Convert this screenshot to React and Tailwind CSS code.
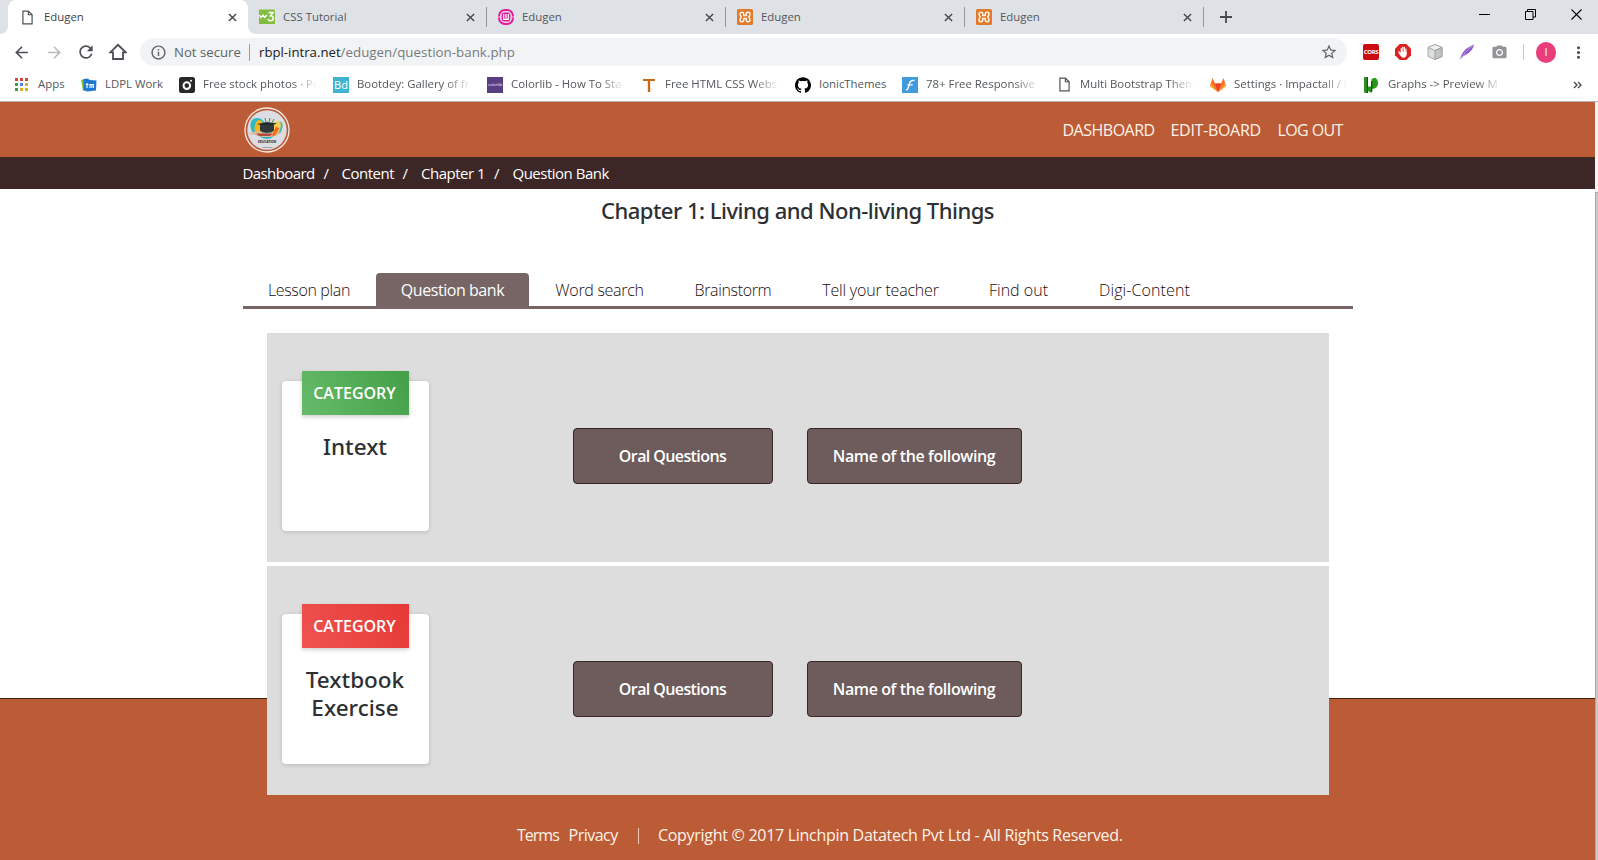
import { SiGithub } from "react-icons/si";
import { MdRefresh, MdArrowBack, MdArrowForward, MdInfoOutline, MdStarBorder, MdMoreVert, MdCameraAlt } from "react-icons/md";

function PageIcon({ className = "" }) {
  return (
    <svg viewBox="0 0 12 16" className={`h-[15px] w-[11px] ${className}`} fill="none" stroke="#4d5156" strokeWidth="1.3">
      <path d="M1 1h6l4 4v10H1z" />
      <path d="M7 1v4h4" />
    </svg>
  );
}

function CloseIcon() {
  return (
    <svg viewBox="0 0 10 10" className="h-[9px] w-[9px]" stroke="#45494d" strokeWidth="1.6" fill="none">
      <path d="M1 1l8 8M9 1l-8 8" />
    </svg>
  );
}

function W3Icon() {
  return (
    <svg viewBox="0 0 16 16" className="h-4 w-4">
      <rect width="16" height="14.5" y="0.5" fill="#83bf3f" />
      <path d="M0.5 6l1.500 2.500L4 6l1.800 2.500L8 6" stroke="#fff" strokeWidth="1.3" fill="none" />
      <path d="M9.500 3.500h4.500l-2.400 3.200c3.600-.2 3.400 5 0 5-1.600 0-2.300-.8-2.400-1.700" stroke="#fff" strokeWidth="1.5" fill="none" />
    </svg>
  );
}

function WampIcon() {
  return (
    <svg viewBox="0 0 16 16" className="h-4 w-4" fill="none">
      <rect x="1" y="1" width="14" height="14" rx="6" stroke="#e6189a" strokeWidth="1.9" />
      <rect x="3.6" y="3.4" width="8.8" height="9.2" rx="3" fill="#e6189a" />
      <path d="M0 8h3M13 8h3" stroke="#fbd" strokeWidth="1" />
      <path d="M5.700 5v5.300h4.600V5M8 5v5" stroke="#fff" strokeWidth="1.2" />
    </svg>
  );
}

function XamppIcon() {
  return (
    <svg viewBox="0 0 16 16" className="h-4 w-4">
      <rect width="16" height="16" rx="1.5" fill="#e07a2c" />
      <path
        d="M6.700 6.500V5c0-2.200-3.700-2.200-3.700 0 0 1.300.4 2.100 1.300 3C3.400 8.900 3 9.700 3 11c0 2.200 3.700 2.200 3.700 0V9.500h2.600V11c0 2.200 3.700 2.200 3.700 0 0-1.300-.4-2.100-1.300-3 .9-.9 1.300-1.700 1.300-3 0-2.200-3.700-2.200-3.700 0v1.500z"
        fill="none"
        stroke="#fff4e2"
        strokeWidth="1.5"
        strokeLinejoin="round"
      />
    </svg>
  );
}

const TABS = [
  { title: "CSS Tutorial", icon: <W3Icon /> },
  { title: "Edugen", icon: <WampIcon /> },
  { title: "Edugen", icon: <XamppIcon /> },
  { title: "Edugen", icon: <XamppIcon /> },
];

function TabStrip() {
  return (
    <div className="flex h-[34px] w-full bg-[#dee1e6] text-[11.4px] text-[#54585c]">
      <div className="flex h-full w-2 shrink-0 bg-white">
        <div className="h-full w-full rounded-br-lg bg-[#dee1e6]" />
      </div>
      <div className="flex h-full w-[240px] shrink-0 items-center rounded-t-lg bg-white pl-[14px] pr-[11px] text-[#3f4347]">
        <PageIcon />
        <span className="ml-[11px] flex-1">Edugen</span>
        <CloseIcon />
      </div>
      <div className="flex h-full w-2 shrink-0 bg-white">
        <div className="h-full w-full rounded-bl-lg bg-[#dee1e6]" />
      </div>
      {TABS.map((tab, i) => (
        <div
          key={i}
          className={`flex h-full shrink-0 items-center pr-[10px] ${i === 0 ? "w-[231px] pl-[3px]" : "w-[239px] pl-[11px]"}`}
        >
          {tab.icon}
          <span className="ml-2 flex-1">{tab.title}</span>
          <CloseIcon />
          <span className="-mr-[10px] ml-[11px] h-5 w-px bg-[#94989d]" />
        </div>
      ))}
      <div className="flex flex-1 items-center pl-[16px]">
        <svg viewBox="0 0 12 12" className="h-3 w-3" stroke="#45494d" strokeWidth="1.8">
          <path d="M6 0v12M0 6h12" />
        </svg>
      </div>
      <div className="flex h-[28px] items-center gap-[35px] pr-4">
        <svg viewBox="0 0 11 11" className="h-[11px] w-[11px]" stroke="#000">
          <path d="M0 5.500h11" />
        </svg>
        <svg viewBox="0 0 11 11" className="h-[11px] w-[11px]" stroke="#000" fill="none">
          <path d="M.5 2.500h7.500v8H.5zM2.500 2.500v-2h8v7.500h-2.500" />
        </svg>
        <svg viewBox="0 0 11 11" className="h-[11px] w-[11px]" stroke="#000" strokeWidth="1.1">
          <path d="M.5.5l10 10M10.500.5l-10 10" />
        </svg>
      </div>
    </div>
  );
}

function Toolbar() {
  return (
    <div className="flex h-[36px] w-full items-center bg-white text-[#5f6368]">
      <div className="flex w-[140px] shrink-0 items-center pl-3">
        <MdArrowBack className="h-[19px] w-[19px] text-[#4b4f53]" />
        <MdArrowForward className="ml-[14px] h-[19px] w-[19px] text-[#b9bbbe]" />
        <MdRefresh className="ml-[12px] h-5 w-5 text-[#4b4f53]" />
        <svg viewBox="0 0 18 18" className="ml-[13px] h-[18px] w-[18px]" fill="none" stroke="#4b4f53" strokeWidth="1.8">
          <path d="M1.300 9.300L9 1.800l7.700 7.500H14V16H4V9.300z" />
        </svg>
      </div>
      <div className="flex h-[28px] w-[1207px] shrink-0 items-center rounded-full bg-[#f1f3f4] text-[13.2px]">
        <MdInfoOutline className="ml-[10px] h-[17px] w-[17px]" />
        <span className="ml-[7px] w-[67px] whitespace-nowrap pt-px">Not secure</span>
        <span className="ml-2 mr-[9px] h-[17px] w-px bg-[#9a9ea3]" />
        <span className="flex-1 whitespace-nowrap pt-px">
          <span className="text-[#202124]">rbpl-intra.net</span>
          <span className="text-[13.3px] tracking-[0.03px] text-[#777b80]">/edugen/question-bank.php</span>
        </span>
        <MdStarBorder className="mr-[9px] h-[18px] w-[18px]" />
      </div>
      <div className="flex flex-1 items-center">
        <span className="ml-4 flex h-4 w-4 items-center justify-center rounded-[2px] bg-[#cc0d10] text-[6px] font-bold tracking-[-0.3px] text-white">
          CORS
        </span>
        <svg viewBox="0 0 16 16" className="ml-4 h-4 w-4">
          <path d="M4.700 0h6.600L16 4.700v6.600L11.300 16H4.700L0 11.300V4.700z" fill="#d92320" />
          <path
            d="M4.400 9.500L3.900 7.500M6.300 8.500V4.300M7.900 8V3M9.500 8V3.600M11 9V5"
            stroke="#fff"
            strokeWidth="1.2"
            strokeLinecap="round"
          />
          <path d="M5.700 8h5.900v2.500c0 2-1.300 3.200-2.900 3.200-2 0-3.200-1.700-4.700-4z" fill="#fff" />
        </svg>
        <svg viewBox="0 0 16 16" className="ml-4 h-4 w-4" stroke="#96999c" strokeWidth=".8" strokeLinejoin="round">
          <path d="M8 .5l7 3v9l-7 3-7-3v-9z" fill="#dcdddd" />
          <path d="M1 3.500l7 3 7-3L8 .5z" fill="#f1f1f1" />
          <path d="M8 6.500v9l7-3v-9z" fill="#c1c3c4" />
        </svg>
        <svg viewBox="0 0 16 16" className="ml-4 h-4 w-4">
          <path d="M1 15.500c1.500-6.500 5-11.500 14-15-.8 4-3.500 7.500-6.500 9.200L4.500 12z" fill="#8a52c6" />
          <path d="M1 15.500C4.500 10 8.500 5.500 14 1.500" stroke="#d6b9f0" strokeWidth=".8" fill="none" />
        </svg>
        <MdCameraAlt className="ml-4 h-[17px] w-[17px] text-[#929497]" />
        <span className="ml-[15px] h-4 w-px bg-[#c4c7ca]" />
        <span className="ml-[12px] flex h-[21px] w-[20px] items-center justify-center rounded-full bg-[#ea3d7c] text-[11px] text-white">
          I
        </span>
        <MdMoreVert className="ml-[13px] h-[19px] w-[19px] text-[#4b4f53]" />
      </div>
    </div>
  );
}

function AppsIcon() {
  const fills = ["#d9453c", "#d9453c", "#d9453c", "#3c9a5b", "#4a83e0", "#e3aa23", "#3c9a5b", "#e3aa23", "#e3aa23"];
  return (
    <svg viewBox="0 0 13 13" className="h-[13px] w-[13px]">
      {fills.map((fill, i) => (
        <rect key={i} x={(i % 3) * 5} y={Math.floor(i / 3) * 5} width="3" height="3" fill={fill} />
      ))}
    </svg>
  );
}

const BOOKMARKS = [
  { text: "Apps", box: "w-[66px]", slot: "w-[23px]", icon: <AppsIcon /> },
  {
    text: "LDPL Work",
    box: "w-[98px]",
    slot: "w-[24px]",
    icon: (
      <svg viewBox="0 0 16 16" className="h-4 w-4">
        <path d="M0 3l4-1 1 11-3 1z" fill="#86c440" />
        <path d="M2.500 2l4.500-.5 1.500 1.500 7 .5-.5 10-9 1-3.500-1.500z" fill="#1e78d2" />
        <path d="M6 6v5M4.800 7.500h2.700M9 11V7.500h1.800V11M10.800 7.500h1.700V11" stroke="#fff" strokeWidth="1.1" fill="none" />
      </svg>
    ),
  },
  {
    text: "Free stock photos · Pe",
    box: "w-[154px]",
    slot: "w-[24px]",
    fade: true,
    icon: (
      <svg viewBox="0 0 16 16" className="h-4 w-4">
        <rect width="16" height="16" rx="2.5" fill="#282828" />
        <circle cx="7.8" cy="8.6" r="3.3" fill="none" stroke="#fff" strokeWidth="2" />
        <circle cx="12" cy="3.7" r="1" fill="#fff" />
      </svg>
    ),
  },
  {
    text: "Bootdey: Gallery of fr",
    box: "w-[154px]",
    slot: "w-[24px]",
    fade: true,
    icon: (
      <span className="flex h-4 w-4 items-center justify-center bg-[#3fb3d2] text-[11px] leading-none text-white">Bd</span>
    ),
  },
  {
    text: "Colorlib - How To Sta",
    box: "w-[155.5px]",
    slot: "w-[24px]",
    fade: true,
    icon: (
      <span className="flex h-4 w-4 items-center justify-center overflow-hidden bg-[#573e85] text-[4px] leading-none text-white">
        colorlib
      </span>
    ),
  },
  {
    text: "Free HTML CSS Webs",
    box: "w-[152.5px]",
    slot: "w-[22.5px]",
    fade: true,
    icon: (
      <svg viewBox="0 0 12 14" className="h-[14px] w-3">
        <path d="M0 1h12v2H7.200v11H4.800V3H0z" fill="#c56a17" />
      </svg>
    ),
  },
  { text: "IonicThemes", box: "w-[107px]", slot: "w-[24px]", icon: <SiGithub className="h-4 w-4 text-black" /> },
  {
    text: "78+ Free Responsive",
    box: "w-[155.5px]",
    slot: "w-[24px]",
    fade: true,
    icon: (
      <svg viewBox="0 0 16 16" className="h-4 w-4">
        <rect width="16" height="16" fill="#3f9bdb" />
        <path d="M12.500 3.500C9 3 8 4 7.500 6.500L6 11.500c-.4 1.300-1 1.500-2.200 1.300M5.500 7.800h5.200" stroke="#fff" strokeWidth="1.3" fill="none" />
      </svg>
    ),
  },
  { text: "Multi Bootstrap Them", box: "w-[152px]", slot: "w-[22.5px]", fade: true, icon: <PageIcon className="ml-px" /> },
  {
    text: "Settings · Impactall / i",
    box: "w-[153.5px]",
    slot: "w-[24.5px]",
    fade: true,
    icon: (
      <svg viewBox="0 0 16 16" className="h-4 w-4">
        <path d="M8 15L0 9l2.500-8L5 6.500h6L13.500 1 16 9z" fill="#fc6d26" />
        <path d="M8 15L5 6.500h6z" fill="#e24329" />
        <path d="M8 15L0 9l1-2.800zM8 15l8-6-1-2.800z" fill="#fca326" />
      </svg>
    ),
  },
  {
    text: "Graphs -> Preview M",
    box: "w-[150px]",
    slot: "w-[25px]",
    fade: true,
    icon: (
      <svg viewBox="0 0 16 16" className="h-4 w-4">
        <path d="M1 0h4v16H2l-1-1z" fill="#2f8f22" />
        <path d="M5 9.500h3.500V16L5 14zM8.500 2L12 .8c2.200 1 3 3 3 5.500 0 3.200-1.800 5.200-5 5.500L8.500 12z" fill="#249a18" />
        <path d="M3.800 0H5v16H3.800zM8 4h1.400v10.500L8 15z" fill="#125c0c" />
      </svg>
    ),
  },
];

function BookmarksBar() {
  return (
    <div className="flex h-[31px] w-full items-center bg-white pb-[2px] pl-[15px] pr-4 text-[11.4px] text-[#54585c]">
      {BOOKMARKS.map((b) => (
        <div key={b.text} className={`flex h-full shrink-0 items-center ${b.box}`}>
          <span className={`flex shrink-0 ${b.slot}`}>{b.icon}</span>
          <span
            className={`whitespace-nowrap pb-px ${
              b.fade ? "w-[114px] overflow-hidden [mask-image:linear-gradient(to_right,#000_78%,transparent)]" : ""
            }`}
          >
            {b.text}
          </span>
        </div>
      ))}
      <svg viewBox="0 0 9 8" className="ml-auto h-2 w-[9px]" fill="none" stroke="#45494d" strokeWidth="1.4">
        <path d="M1 1l3 3-3 3M5 1l3 3-3 3" />
      </svg>
    </div>
  );
}

function Logo() {
  return (
    <svg viewBox="0 0 46 46" className="h-[46px] w-[46px]">
      <circle cx="23" cy="23" r="22" fill="#b65b3a" stroke="#fbe9dd" strokeWidth="1.3" />
      <circle cx="23" cy="23" r="19.7" fill="#dcdee3" />
      <path d="M7 22c-2-6 1-11 6-11 4 0 6 2 8 5h12c4-4 7 0 5 6-1 4-4 6-8 7-2 2-4 3-7 3s-6-1-8-3c-4-1-7-3-8-7z" fill="#2fb9c4" />
      <path d="M11 25c-1-5 0-11 4-12 4 0 4 4 4 7l-1 6z" fill="#f2b51d" />
      <path d="M29 15l6-1c3 2 2 7 0 11l-7 2z" fill="#f4cf58" />
      <path d="M4 26.500l9-2.500 8 2 9-1 9 .5-7 3c-5 2-15 2-19 0z" fill="#e0b89c" />
      <path d="M12 26.500h17l-3 2.500H15z" fill="#b3483c" />
      <path d="M13 17l10-2 10 1.500-9 3.500z" fill="#232a2c" />
      <path d="M16 18h14v5.500c-3 3-11 3-14 0z" fill="#30383a" />
      <path d="M28 28.500l4-9 3.500 2-5 7.500z" fill="#ef6c1a" />
      <path d="M22 15l-1-4M25 15l1-4M28 16l2-4" stroke="#3a8f5a" strokeWidth="1" />
      <text x="23" y="36.200" textAnchor="middle" fontSize="3.2" fontWeight="700" fill="#1d1d1d" textLength="18">
        EDUCATION
      </text>
      <path d="M18.500 40.500h10" stroke="#8d97a3" strokeWidth=".8" />
    </svg>
  );
}

function SiteHeader() {
  return (
    <header className="text-white">
      <div className="h-[55px] bg-[#bc5c36]">
        <div className="mx-auto flex h-full w-[1110px] items-center pl-px">
          <div className="pt-px">
            <Logo />
          </div>
          <nav className="ml-auto flex whitespace-nowrap pr-[10px] pt-px text-[16px] text-[#fff3e9]">
            <a className="w-[108px] tracking-[-0.5px]">DASHBOARD</a>
            <a className="w-[107px] tracking-[-0.3px]">EDIT-BOARD</a>
            <a className="w-[65px] tracking-[-0.6px]">LOG OUT</a>
          </nav>
        </div>
      </div>
      <div className="h-[32px] bg-[#3c2626]">
        <div className="mx-auto flex h-full w-[1110px] items-center whitespace-nowrap pt-px text-[15px] tracking-[-0.5px]">
          <a className="w-[81px] tracking-[-0.6px]">Dashboard</a>
          <span className="w-[18px]">/</span>
          <a className="w-[61px]">Content</a>
          <span className="w-[18.5px]">/</span>
          <a className="w-[73px]">Chapter 1</a>
          <span className="w-[18.5px]">/</span>
          <a>Question Bank</a>
        </div>
      </div>
    </header>
  );
}

const SECTIONS = [
  { text: "Lesson plan", cls: "w-[133px] font-light text-[#1c0c0c] tracking-[-0.35px]" },
  { text: "Question bank", cls: "w-[153px] pl-px rounded-t bg-[#766564] text-white tracking-[-0.45px]" },
  { text: "Word search", cls: "w-[140px] pl-0.5 font-light text-[#1c0c0c] tracking-[-0.3px]" },
  { text: "Brainstorm", cls: "w-[127px] pl-0.5 font-light text-[#1c0c0c] tracking-[-0.35px]" },
  { text: "Tell your teacher", cls: "w-[167px] pl-[3px] font-light text-[#1c0c0c] tracking-[-0.2px]" },
  { text: "Find out", cls: "w-[110px] pl-0.5 font-light text-[#1c0c0c]" },
  { text: "Digi-Content", cls: "w-[142px] pl-0.5 font-light text-[#1c0c0c] tracking-[0.1px]" },
];

function SectionTabs() {
  return (
    <div className="mx-auto mt-[45px] flex h-[36px] w-[1110px] border-b-[3px] border-[#766564] text-[16px]">
      {SECTIONS.map((s) => (
        <a key={s.text} className={`flex items-center justify-center whitespace-nowrap pt-px ${s.cls}`}>
          {s.text}
        </a>
      ))}
    </div>
  );
}

function QuestionButton({ className = "", children }) {
  return (
    <button
      className={`h-[56px] rounded border border-[#3c2626] bg-[#6d5c5b] pb-px text-[16px] font-semibold text-white ${className}`}
    >
      {children}
    </button>
  );
}

function CategoryPanel({ title, badge }) {
  return (
    <section className="flex h-[229px] items-start bg-[#dddddd] pl-[15px]">
      <div className="mt-[48px] flex h-[150px] w-[147px] flex-col items-center rounded bg-white shadow-[0_1px_4px_rgba(0,0,0,0.16)]">
        <div
          className={`-mt-[10px] flex h-[44px] w-[107px] shrink-0 items-center justify-center pb-px pr-px text-[16px] font-semibold text-white shadow-[0_2px_4px_rgba(0,0,0,0.18)] ${badge}`}
        >
          CATEGORY
        </div>
        <h3 className="mt-[18px] w-[120px] text-center font-['Noto_Sans','Open_Sans',sans-serif] text-[22.5px] font-medium leading-[28px] text-[#2d3033]">
          {title}
        </h3>
      </div>
      <QuestionButton className="ml-[144px] mt-[95px] w-[200px] tracking-[-0.6px]">Oral Questions</QuestionButton>
      <QuestionButton className="ml-[34px] mt-[95px] w-[215px] tracking-[-0.4px]">Name of the following</QuestionButton>
    </section>
  );
}

function SiteFooter() {
  return (
    <footer className="flex h-[162px] items-end whitespace-nowrap border-t border-[#3c2010] bg-[#bc5c36] pb-[14px] pl-[517px] text-[#fff3e9]">
      <div className="flex h-5 items-center text-[16px]">
        <a className="w-[51.5px] pb-0.5 tracking-[-1px]">Terms</a>
        <a className="w-[49px] pb-0.5 tracking-[-0.5px]">Privacy</a>
        <span className="ml-[20.5px] h-4 w-px bg-[#f0c9b5]" />
        <span className="ml-[19px] pb-0.5 tracking-[-0.29px]">
          Copyright © 2017 Linchpin Datatech Pvt Ltd - All Rights Reserved.
        </span>
      </div>
    </footer>
  );
}

export default function App() {
  return (
    <div className="flex h-[860px] w-[1598px] flex-col overflow-hidden bg-white font-['Open_Sans','Noto_Sans',sans-serif]">
      <TabStrip />
      <Toolbar />
      <BookmarksBar />
      <div className="h-px w-full shrink-0 bg-[#b3b3b3]" />
      <div className="flex h-[758px] w-full">
        <div className="h-full w-[1595px] shrink-0">
          <SiteHeader />
          <main className="relative z-10 h-[509px]">
            <h1 className="h-[39px] pt-[6px] text-center font-['Noto_Sans','Open_Sans',sans-serif] text-[22px] font-medium leading-[30px] tracking-[-0.5px] text-[#2d3033]">
              Chapter 1: Living and Non-living Things
            </h1>
            <SectionTabs />
            <div className="mx-auto mt-[24px] flex w-[1062px] flex-col gap-1 bg-white">
              <CategoryPanel title="Intext" badge="bg-linear-[60deg,#66bb6a,#43a047]" />
              <CategoryPanel title="Textbook Exercise" badge="bg-linear-[60deg,#ef5350,#e53935]" />
            </div>
          </main>
          <SiteFooter />
        </div>
        <div className="h-full w-[3px] bg-[#f4f4f4] pt-[90px]">
          <div className="h-full w-full border-l border-t border-[#a8a8a8] bg-[#c9c9c9]" />
        </div>
      </div>
    </div>
  );
}
